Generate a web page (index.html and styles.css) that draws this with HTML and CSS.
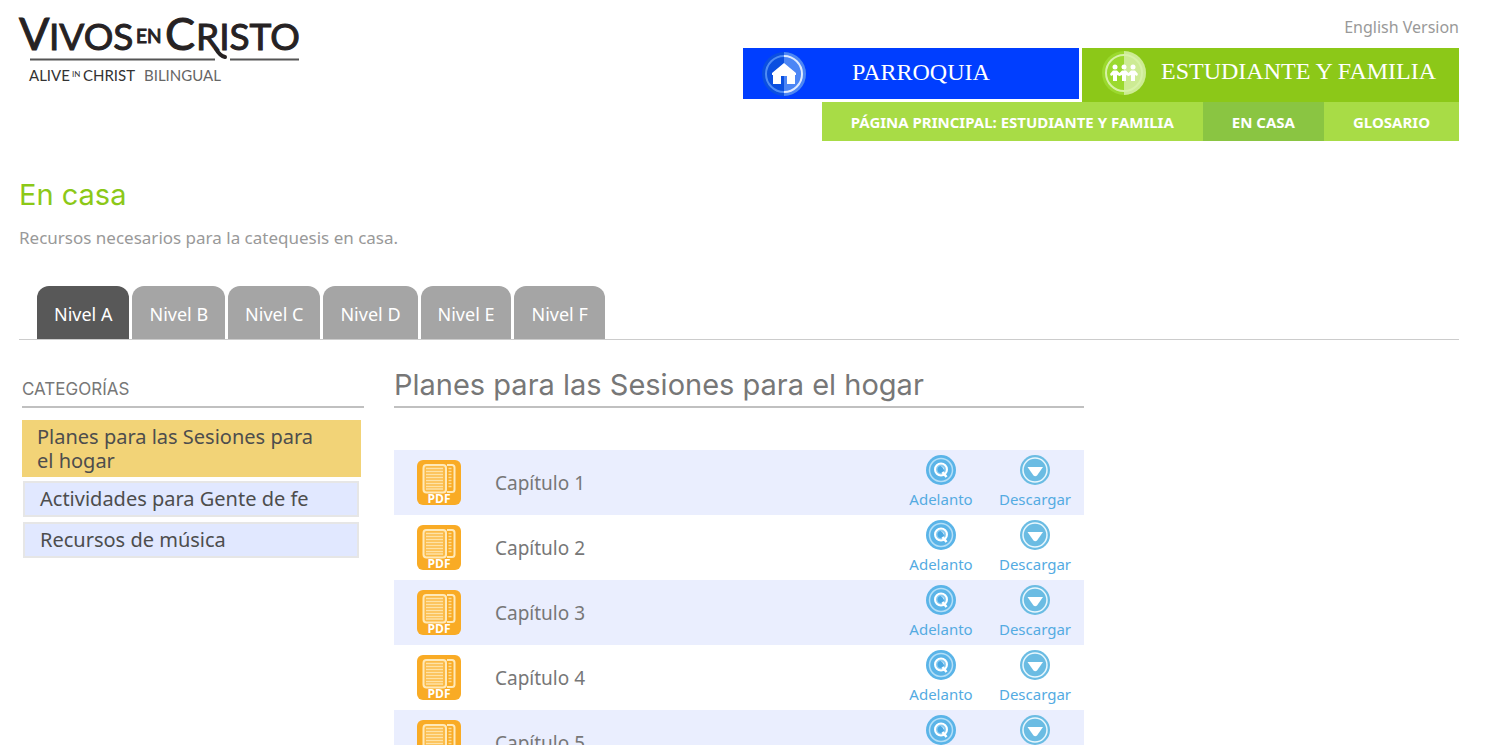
FILE: index.html
```html
<!DOCTYPE html>
<html lang="es">
<head>
    <meta charset="UTF-8">
    <meta name="viewport" content="width=device-width, initial-scale=1.0">
    <title>Vivos en Cristo - En casa</title>
    <link rel="stylesheet" href="styles.css">
</head>
<body>
    <!-- Iconos compartidos -->
    <svg class="sprite" width="0" height="0" aria-hidden="true">
        <symbol id="icon-pdf" viewBox="0 0 44 45">
            <rect width="44" height="45" rx="6" fill="#f9ab25"/>
            <path d="M30 5h5q2.500 0 2.500 2.500v22q0 2.500-2.500 2.500h-5" fill="none" stroke="#ffe9b8" stroke-width="2"/>
            <path d="M31.500 8.500h3M31.500 11.500h3M31.500 14.500h3M31.500 17.500h3M31.500 20.500h3M31.500 23.500h3M31.500 26.500h3" stroke="#fddc94" stroke-width="1.500"/>
            <rect x="6.500" y="5" width="22.500" height="27.500" rx="3" fill="#fbbb48" stroke="#ffe9b8" stroke-width="2"/>
            <path d="M9 8.500h17M9 11.500h17M9 14.500h17M9 17.500h17M9 20.500h17M9 23.500h17M9 26.500h17M9 29h17" stroke="#fee2a6" stroke-width="1.500"/>
            <text x="22" y="43" text-anchor="middle" class="pdf-label">PDF</text>
        </symbol>
        <symbol id="icon-preview" viewBox="0 0 30 30">
            <circle cx="15" cy="15" r="15" fill="#5ab4e8"/>
            <circle cx="15" cy="15" r="11.500" fill="none" stroke="#b5dff7" stroke-width="1.500"/>
            <circle cx="15" cy="14.500" r="6" fill="#8accf1" stroke="#fff" stroke-width="2"/>
            <circle cx="15" cy="14.500" r="3.500" fill="#4aa8e3"/>
            <path d="M15.500 11.500q2.500.5 2.500 3" fill="none" stroke="#d9f0fc"/>
            <path d="M16.500 17l4 5" stroke="#fff" stroke-width="2.500"/>
        </symbol>
        <symbol id="icon-download" viewBox="0 0 30 30">
            <circle cx="15" cy="15" r="15" fill="#6bbce3"/>
            <circle cx="15" cy="15" r="12" fill="none" stroke="#e8f7fd" stroke-width="1.500"/>
            <path d="M7.500 12h15.500l-6 8.500q-1.750 1.500-3.500 0z" fill="#fff"/>
        </symbol>
    </svg>

    <header class="header">
        <a class="logo" href="#" aria-label="Vivos en Cristo">
            <svg width="280" height="76" viewBox="0 0 280 76">
                <g class="logo-main">
                    <text class="logo-cap" x="0" y="38">V</text>
                    <text x="30" y="38">IVOS</text>
                    <text class="logo-en" x="117" y="31">EN</text>
                    <text class="logo-cap" x="146" y="38">C</text>
                    <text x="177" y="38">RISTO</text>
                </g>
                <path d="M197 37q4 7 9 8" fill="none" stroke="#262223" stroke-width="4" stroke-linecap="round"/>
                <path d="M11 47.500h185M211 47.500h69" stroke="#555" stroke-width="2"/>
                <g class="logo-sub">
                    <text x="10" y="69">ALIVE</text>
                    <text class="logo-in" x="53" y="65">IN</text>
                    <text x="64" y="69">CHRIST</text>
                    <text class="logo-bilingual" x="125" y="69">BILINGUAL</text>
                </g>
            </svg>
        </a>
        <div class="header-right">
            <a class="language" href="#">English Version</a>
            <nav class="main-nav">
                <a class="nav-parish" href="#">
                    <svg width="46" height="46" viewBox="0 0 46 46" aria-hidden="true">
                        <circle cx="23" cy="23" r="22" fill="#0a4fe0"/>
                        <path d="M23 1a22 22 0 0 1 0 44z" fill="#4c86f5"/>
                        <circle cx="23" cy="23" r="18" fill="none" stroke="#4f8cf5" stroke-width="2"/>
                        <path d="M23 5a18 18 0 0 1 0 36" fill="none" stroke="#dfeaff" stroke-width="2"/>
                        <path d="M11 22l12-10 12 10v2h-1v9h-8v-8h-6v8h-8v-9h-1z" fill="#fff"/>
                    </svg>
                    <span>PARROQUIA</span>
                </a>
                <a class="nav-family" href="#">
                    <svg width="46" height="46" viewBox="0 0 46 46" aria-hidden="true">
                        <circle cx="23" cy="23" r="22" fill="#9bd92e"/>
                        <path d="M23 1a22 22 0 0 1 0 44z" fill="#cdeb94"/>
                        <circle cx="23" cy="23" r="18" fill="none" stroke="#d7f2a6" stroke-width="2"/>
                        <g fill="#fff">
                            <circle cx="14" cy="17" r="2.500"/>
                            <circle cx="23" cy="17" r="2.500"/>
                            <circle cx="32" cy="17" r="2.500"/>
                            <path d="M9 24l3-3.500h4l2.500 2.500 2.500-2.500h4l2.500 2.500 2.500-2.500h4l3 3.500-1 2-2-1v6h-4v-6l-2.500 1-2.500-1v6h-4v-6l-2.500 1-2.500-1v6h-4v-6l-2 1z"/>
                        </g>
                    </svg>
                    <span>ESTUDIANTE Y FAMILIA</span>
                </a>
            </nav>
            <nav class="sub-nav">
                <a href="#">PÁGINA PRINCIPAL: ESTUDIANTE Y FAMILIA</a>
                <a class="active" href="#">EN CASA</a>
                <a href="#">GLOSARIO</a>
            </nav>
        </div>
    </header>

    <section class="intro">
        <h1>En casa</h1>
        <p>Recursos necesarios para la catequesis en casa.</p>
    </section>

    <!-- Niveles -->
    <nav class="tabs">
        <a class="active" href="#">Nivel A</a>
        <a href="#">Nivel B</a>
        <a href="#">Nivel C</a>
        <a href="#">Nivel D</a>
        <a href="#">Nivel E</a>
        <a href="#">Nivel F</a>
    </nav>

    <div class="content">
        <aside class="sidebar">
            <h3>CATEGORÍAS</h3>
            <ul>
                <li><a class="active" href="#">Planes para las Sesiones para el hogar</a></li>
                <li><a href="#">Actividades para Gente de fe</a></li>
                <li><a href="#">Recursos de música</a></li>
            </ul>
        </aside>

        <main class="resources">
            <h2>Planes para las Sesiones para el hogar</h2>
            <table>
                <tbody>
                    <tr>
                        <td class="type"><svg width="44" height="45"><use href="#icon-pdf"/></svg></td>
                        <td class="title">Capítulo 1</td>
                        <td class="action"><a href="#"><svg width="30" height="30"><use href="#icon-preview"/></svg>Adelanto</a></td>
                        <td class="action"><a href="#"><svg width="30" height="30"><use href="#icon-download"/></svg>Descargar</a></td>
                    </tr>
                    <tr>
                        <td class="type"><svg width="44" height="45"><use href="#icon-pdf"/></svg></td>
                        <td class="title">Capítulo 2</td>
                        <td class="action"><a href="#"><svg width="30" height="30"><use href="#icon-preview"/></svg>Adelanto</a></td>
                        <td class="action"><a href="#"><svg width="30" height="30"><use href="#icon-download"/></svg>Descargar</a></td>
                    </tr>
                    <tr>
                        <td class="type"><svg width="44" height="45"><use href="#icon-pdf"/></svg></td>
                        <td class="title">Capítulo 3</td>
                        <td class="action"><a href="#"><svg width="30" height="30"><use href="#icon-preview"/></svg>Adelanto</a></td>
                        <td class="action"><a href="#"><svg width="30" height="30"><use href="#icon-download"/></svg>Descargar</a></td>
                    </tr>
                    <tr>
                        <td class="type"><svg width="44" height="45"><use href="#icon-pdf"/></svg></td>
                        <td class="title">Capítulo 4</td>
                        <td class="action"><a href="#"><svg width="30" height="30"><use href="#icon-preview"/></svg>Adelanto</a></td>
                        <td class="action"><a href="#"><svg width="30" height="30"><use href="#icon-download"/></svg>Descargar</a></td>
                    </tr>
                    <tr>
                        <td class="type"><svg width="44" height="45"><use href="#icon-pdf"/></svg></td>
                        <td class="title">Capítulo 5</td>
                        <td class="action"><a href="#"><svg width="30" height="30"><use href="#icon-preview"/></svg>Adelanto</a></td>
                        <td class="action"><a href="#"><svg width="30" height="30"><use href="#icon-download"/></svg>Descargar</a></td>
                    </tr>
                </tbody>
            </table>
        </main>
    </div>
</body>
</html>
```
FILE: styles.css
```css
* {
    box-sizing: border-box;
}
body {
    margin: 0;
    padding: 0 29px 0 19px;
    font-family: "Noto Sans", "Open Sans", sans-serif;
    color: #777;
    background: #fff;
}
a {
    text-decoration: none;
}
h1, h2, h3, p, ul {
    margin: 0;
    padding: 0;
}
svg {
    display: block;
}
.sprite {
    position: absolute;
}
.pdf-label {
    font: bold 12px "Open Sans", sans-serif;
    fill: #fff;
}

/* Header */
.header {
    display: flex;
    justify-content: space-between;
    align-items: flex-start;
}
.logo {
    padding-top: 12px;
}
.logo svg {
    overflow: visible;
}
.logo-main {
    font: 37px Lato, sans-serif;
    fill: #262223;
    stroke: #262223;
}
.logo-cap {
    font-size: 45px;
}
.logo-en {
    font-size: 19px;
}
.logo-sub {
    font: 15px Lato, sans-serif;
    fill: #333;
}
.logo-in {
    font-size: 8px;
}
.logo-bilingual {
    fill: #666;
}
.header-right {
    display: flex;
    flex-direction: column;
    align-items: flex-end;
}
.language {
    height: 48px;
    padding-top: 16px;
    font-size: 16px;
    line-height: 22px;
    color: #999;
}
.main-nav {
    display: flex;
    align-items: flex-start;
    gap: 3px;
}
.main-nav a {
    display: flex;
    align-items: center;
    font: 24px "Liberation Serif", serif;
    color: #fff;
}
.main-nav span {
    padding-bottom: 3px;
}
.main-nav .nav-parish {
    width: 336px;
    height: 51px;
    gap: 45px;
    padding-left: 18px;
    background: #003eff;
}
.main-nav .nav-family {
    width: 377px;
    height: 54px;
    gap: 14px;
    padding: 0 0 4px 19px;
    background: #8cc818;
}
.sub-nav {
    display: flex;
    background: #a8dc46;
}
.sub-nav a {
    padding: 1px 29px 0;
    font-size: 15px;
    font-weight: bold;
    line-height: 38px;
    color: #fff;
}
.sub-nav .active {
    background: #8ac542;
}

/* Intro */
.intro {
    padding-top: 34px;
}
.intro h1 {
    font: 29px/40px Inter, sans-serif;
    color: #8cc818;
}
.intro p {
    margin-top: 10px;
    font-size: 17px;
    line-height: 26px;
    color: #999;
}

/* Tabs */
.tabs {
    display: flex;
    gap: 3px;
    margin-top: 35px;
    padding-left: 18px;
    border-bottom: 1px solid #ccc;
}
.tabs a {
    padding: 3px 17px 0;
    border-radius: 12px 12px 0 0;
    font-size: 18px;
    line-height: 50px;
    color: #fff;
    background: #a5a5a5;
}
.tabs .active {
    background: #585858;
}

/* Content */
.content {
    display: flex;
    gap: 30px;
    padding: 25px 0 0 3px;
}
.sidebar {
    flex: 0 0 342px;
}
.sidebar h3 {
    padding: 11px 0 4px;
    border-bottom: 2px solid #c0c0c0;
    font: 17px/26px Inter, sans-serif;
}
.sidebar ul {
    margin: 12px 3px 0 0;
    list-style: none;
}
.sidebar a {
    display: block;
    margin: 4px 2px 5px 1px;
    padding: 4px 15px;
    border: 2px solid #e6e6e6;
    font-size: 20px;
    line-height: 24px;
    color: #4d4d4d;
    background: #e1e8ff;
}
.sidebar .active {
    margin: 0;
    padding: 5px 45px 4px 15px;
    border: 0;
    background: #f2d377;
}
.resources {
    flex: 0 1 690px;
}
.resources h2 {
    padding-bottom: 2px;
    border-bottom: 2px solid #c0c0c0;
    font: 29px/39px Inter, sans-serif;
}
.resources table {
    width: 100%;
    margin-top: 42px;
    border-collapse: collapse;
}
.resources tr {
    height: 65px;
}
.resources tr:nth-child(odd) {
    background: #eaeefe;
}
.resources td {
    padding: 0;
}
.resources .type {
    width: 101px;
    padding-left: 23px;
}
.resources .title {
    font-size: 19px;
}
.resources .action {
    width: 90px;
    vertical-align: top;
}
.resources .action:last-child {
    width: 98px;
}
.action a {
    display: flex;
    flex-direction: column;
    align-items: center;
    padding-top: 5px;
    font-size: 15px;
    line-height: 28px;
    color: #54abe2;
}
```
